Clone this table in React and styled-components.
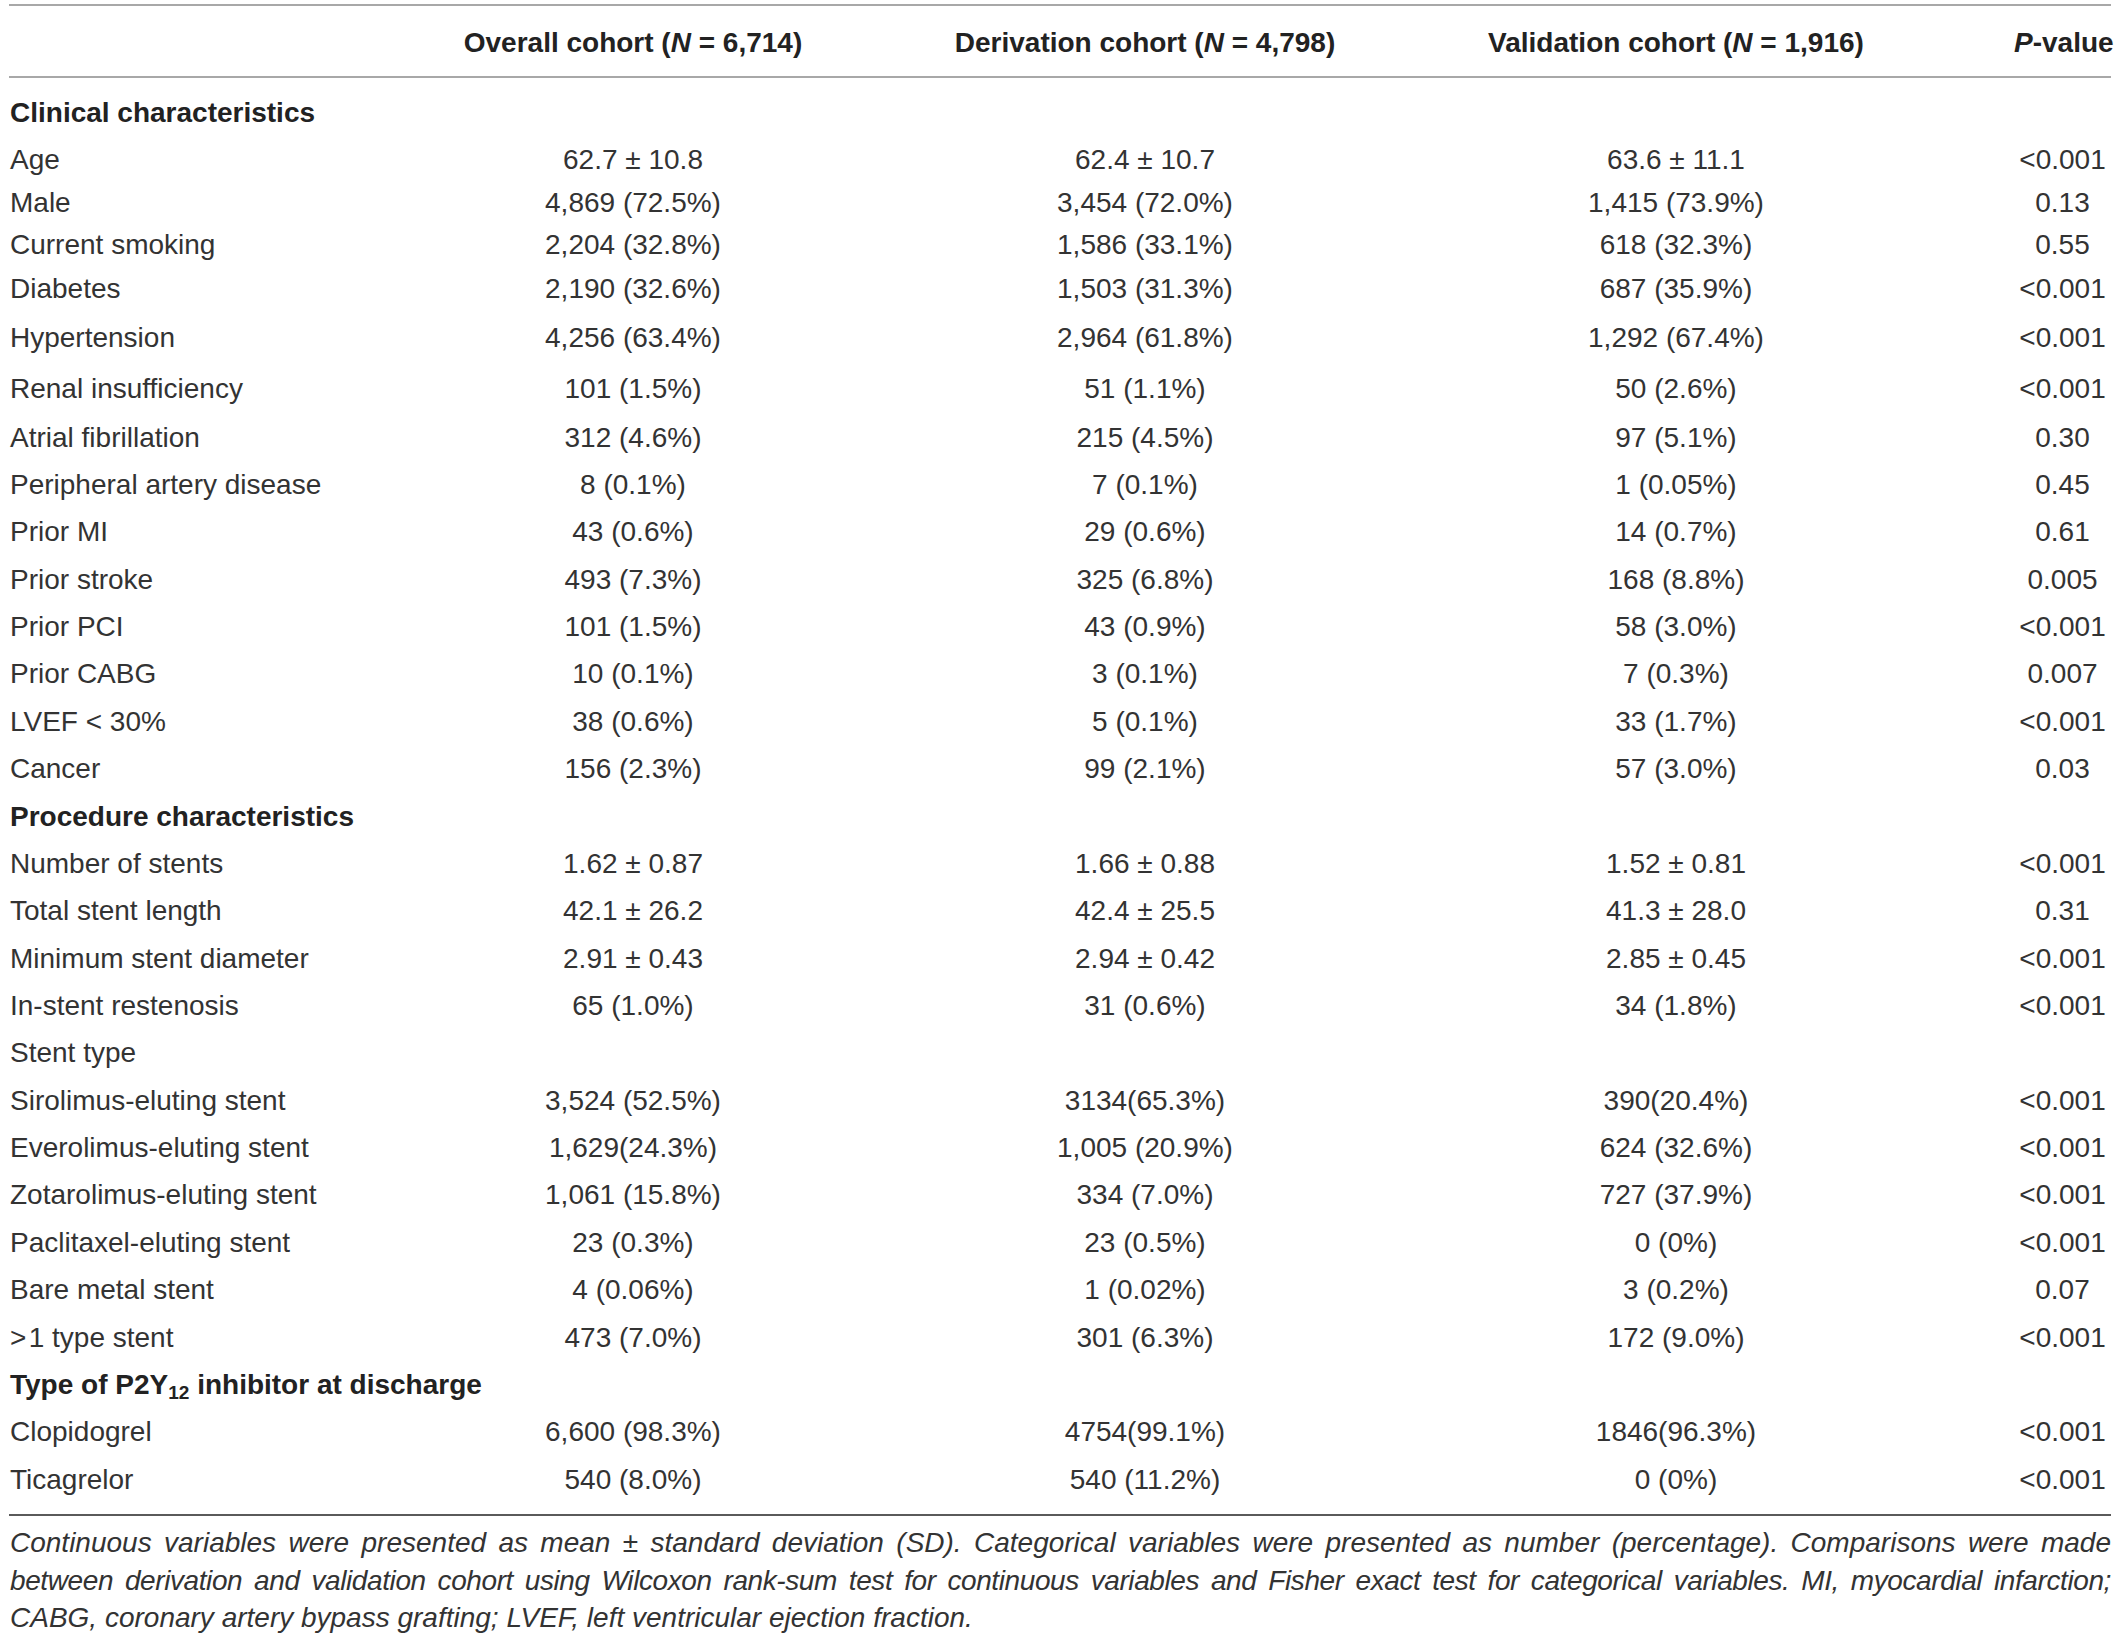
import styled, { createGlobalStyle } from "styled-components";

const GlobalStyle = createGlobalStyle`
  body {
    margin: 0;
    background: #ffffff;
  }
`;

const SubText = styled.sub`
  font-size: 0.68em;
  vertical-align: -0.28em;
  line-height: 0;
`;

const rows = [
  { kind: "section", label: "Clinical characteristics", h: 50 },
  { label: "Age", v: ["62.7 ± 10.8", "62.4 ± 10.7", "63.6 ± 11.1", "<0.001"], h: 44 },
  { label: "Male", v: ["4,869 (72.5%)", "3,454 (72.0%)", "1,415 (73.9%)", "0.13"], h: 42 },
  { label: "Current smoking", v: ["2,204 (32.8%)", "1,586 (33.1%)", "618 (32.3%)", "0.55"], h: 42 },
  { label: "Diabetes", v: ["2,190 (32.6%)", "1,503 (31.3%)", "687 (35.9%)", "<0.001"], h: 46 },
  { label: "Hypertension", v: ["4,256 (63.4%)", "2,964 (61.8%)", "1,292 (67.4%)", "<0.001"], h: 52 },
  { label: "Renal insufficiency", v: ["101 (1.5%)", "51 (1.1%)", "50 (2.6%)", "<0.001"], h: 50 },
  { label: "Atrial fibrillation", v: ["312 (4.6%)", "215 (4.5%)", "97 (5.1%)", "0.30"] },
  { label: "Peripheral artery disease", v: ["8 (0.1%)", "7 (0.1%)", "1 (0.05%)", "0.45"] },
  { label: "Prior MI", v: ["43 (0.6%)", "29 (0.6%)", "14 (0.7%)", "0.61"] },
  { label: "Prior stroke", v: ["493 (7.3%)", "325 (6.8%)", "168 (8.8%)", "0.005"] },
  { label: "Prior PCI", v: ["101 (1.5%)", "43 (0.9%)", "58 (3.0%)", "<0.001"] },
  { label: "Prior CABG", v: ["10 (0.1%)", "3 (0.1%)", "7 (0.3%)", "0.007"] },
  { label: "LVEF < 30%", v: ["38 (0.6%)", "5 (0.1%)", "33 (1.7%)", "<0.001"] },
  { label: "Cancer", v: ["156 (2.3%)", "99 (2.1%)", "57 (3.0%)", "0.03"] },
  { kind: "section", label: "Procedure characteristics" },
  { label: "Number of stents", v: ["1.62 ± 0.87", "1.66 ± 0.88", "1.52 ± 0.81", "<0.001"] },
  { label: "Total stent length", v: ["42.1 ± 26.2", "42.4 ± 25.5", "41.3 ± 28.0", "0.31"] },
  { label: "Minimum stent diameter", v: ["2.91 ± 0.43", "2.94 ± 0.42", "2.85 ± 0.45", "<0.001"] },
  { label: "In-stent restenosis", v: ["65 (1.0%)", "31 (0.6%)", "34 (1.8%)", "<0.001"] },
  { label: "Stent type" },
  { label: "Sirolimus-eluting stent", v: ["3,524 (52.5%)", "3134(65.3%)", "390(20.4%)", "<0.001"] },
  { label: "Everolimus-eluting stent", v: ["1,629(24.3%)", "1,005 (20.9%)", "624 (32.6%)", "<0.001"] },
  { label: "Zotarolimus-eluting stent", v: ["1,061 (15.8%)", "334 (7.0%)", "727 (37.9%)", "<0.001"] },
  { label: "Paclitaxel-eluting stent", v: ["23 (0.3%)", "23 (0.5%)", "0 (0%)", "<0.001"] },
  { label: "Bare metal stent", v: ["4 (0.06%)", "1 (0.02%)", "3 (0.2%)", "0.07"] },
  { label: ">\u200a1 type stent", v: ["473 (7.0%)", "301 (6.3%)", "172 (9.0%)", "<0.001"] },
  {
    kind: "section",
    label: (
      <>
        Type of P2Y<SubText>12</SubText> inhibitor at discharge
      </>
    ),
  },
  { label: "Clopidogrel", v: ["6,600 (98.3%)", "4754(99.1%)", "1846(96.3%)", "<0.001"] },
  { label: "Ticagrelor", v: ["540 (8.0%)", "540 (11.2%)", "0 (0%)", "<0.001"] },
];

const Page = styled.div`
  width: 2102px;
  padding: 4px 0 0 9px;
  font-family: "Liberation Sans", Arial, Helvetica, sans-serif;
  font-size: 28px;
  color: #333333;
`;

const Row = styled.div`
  display: grid;
  grid-template-columns: 391px 466px 558px 504px 183px;
  align-items: center;
  height: ${(p) => p.$h}px;
  line-height: 34px;
`;

const HeadRow = styled(Row)`
  height: auto;
  padding: 20px 0 16px;
  border-top: 2px solid #a8a8a8;
  border-bottom: 2px solid #a8a8a8;
  font-weight: bold;
  color: #222222;
`;

const Body = styled.div`
  padding: 10px 0 11px;
`;

const Label = styled.div`
  padding-left: 1px;
  white-space: nowrap;
  font-weight: ${(p) => (p.$bold ? "bold" : "normal")};
  color: ${(p) => (p.$bold ? "#222222" : "inherit")};
`;

const Cell = styled.div`
  text-align: center;
  white-space: nowrap;
`;

const PCell = styled(Cell)`
  padding-left: 86px;
`;

const Note = styled.div`
  border-top: 2px solid #5a5a5a;
  padding-top: 8px;
  font-style: italic;
  font-size: 28px;
  line-height: 37.5px;
  color: #333333;
`;

const NoteLine = styled.div`
  white-space: nowrap;
  text-align: ${(p) => (p.$justify ? "justify" : "left")};
  text-align-last: ${(p) => (p.$justify ? "justify" : "left")};
  letter-spacing: ${(p) => p.$tight || 0}px;
  padding-left: 1px;
`;

export default function App() {
  return (
    <>
      <GlobalStyle />
      <Page>
        <HeadRow>
          <Label />
          <Cell>
            Overall cohort (<i>N</i> = 6,714)
          </Cell>
          <Cell>
            Derivation cohort (<i>N</i> = 4,798)
          </Cell>
          <Cell>
            Validation cohort (<i>N</i> = 1,916)
          </Cell>
          <PCell>
            <i>P</i>-value
          </PCell>
        </HeadRow>
        <Body>
          {rows.map((row, i) => (
            <Row key={i} $h={row.h || 47.36}>
              <Label $bold={row.kind === "section"}>{row.label}</Label>
              {row.v && (
                <>
                  <Cell>{row.v[0]}</Cell>
                  <Cell>{row.v[1]}</Cell>
                  <Cell>{row.v[2]}</Cell>
                  <PCell>{row.v[3]}</PCell>
                </>
              )}
            </Row>
          ))}
        </Body>
        <Note>
          <NoteLine $justify>
            Continuous variables were presented as mean ± standard deviation (SD). Categorical
            variables were presented as number (percentage). Comparisons were made
          </NoteLine>
          <NoteLine $justify $tight={-0.4}>
            between derivation and validation cohort using Wilcoxon rank-sum test for continuous
            variables and Fisher exact test for categorical variables. MI, myocardial infarction;
          </NoteLine>
          <NoteLine>
            CABG, coronary artery bypass grafting; LVEF, left ventricular ejection fraction.
          </NoteLine>
        </Note>
      </Page>
    </>
  );
}
